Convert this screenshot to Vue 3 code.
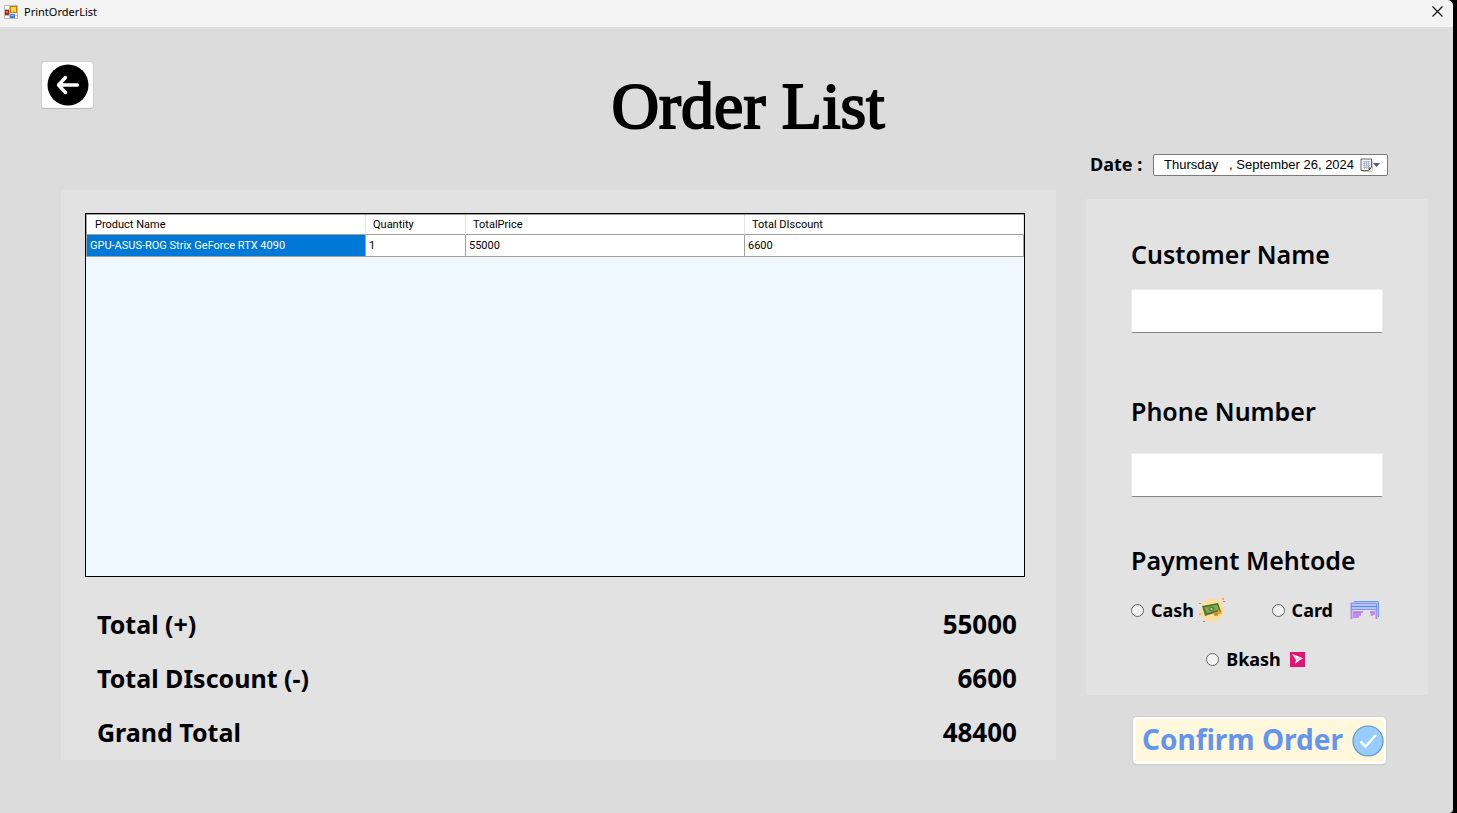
<script setup>
import { ref } from 'vue'

const columns = ['Product Name', 'Quantity', 'TotalPrice', 'Total DIscount']
const rows = [['GPU-ASUS-ROG Strix GeForce RTX 4090', '1', '55000', '6600']]
const totals = [
  { label: 'Total (+)', value: '55000' },
  { label: 'Total DIscount (-)', value: '6600' },
  { label: 'Grand Total', value: '48400' }
]
const date = ref('Thursday   , September 26, 2024')
const customer = ref('')
const phone = ref('')
const payment = ref('')
</script>

<template>
  <div class="window">
    <header class="titlebar">
      <svg class="app-icon" width="14" height="14" viewBox="0 0 14 14" aria-hidden="true">
        <rect x="0.5" y="0.5" width="13" height="13" fill="#fff" stroke="#bdbdbd" />
        <path d="M5.5 0v14M0 4.5h6M0 10.5h14" stroke="#bdbdbd" />
        <rect x="6.5" y="1.5" width="6" height="6" fill="#ffd24a" stroke="#b98500" />
        <rect x="1" y="5" width="4" height="5" fill="#b51f16" />
        <rect x="2" y="6" width="2" height="2" fill="#e56a5c" />
        <rect x="6" y="9" width="5" height="4" fill="#3f83e0" />
        <rect x="7" y="10" width="3" height="1" fill="#8fbcff" />
      </svg>
      <span class="caption">PrintOrderList</span>
      <button class="close" type="button" aria-label="Close">
        <svg width="11" height="11" viewBox="0 0 11 11"><path d="M0.5 0.5l10 10M10.5 0.5l-10 10" stroke="#111" stroke-width="1.2" /></svg>
      </button>
    </header>

    <div class="heading">
      <button class="back" type="button" aria-label="Back">
        <svg width="42" height="42" viewBox="0 0 42 42">
          <circle cx="21" cy="21" r="20.5" fill="#000" />
          <path d="M30.500 21H12M18.500 13.500L11.500 21l7 7.500" fill="none" stroke="#fff" stroke-width="3.400" stroke-linecap="round" stroke-linejoin="round" />
        </svg>
      </button>
      <h1>Order List</h1>
    </div>

    <main class="content">
      <section class="panel order">
        <div class="grid-box">
          <table>
            <colgroup>
              <col class="wide" /><col class="narrow" /><col class="wide" /><col class="wide" />
            </colgroup>
            <thead>
              <tr><th v-for="c in columns" :key="c" scope="col">{{ c }}</th></tr>
            </thead>
            <tbody>
              <tr v-for="(r, i) in rows" :key="i">
                <td v-for="(cell, j) in r" :key="j" :class="{ selected: i === 0 && j === 0 }">{{ cell }}</td>
              </tr>
            </tbody>
          </table>
        </div>
        <dl class="totals">
          <div v-for="t in totals" :key="t.label" class="total">
            <dt>{{ t.label }}</dt>
            <dd>{{ t.value }}</dd>
          </div>
        </dl>
      </section>

      <form class="side" @submit.prevent>
        <div class="date-row">
          <label for="date">Date :</label>
          <div class="picker">
            <input id="date" v-model="date" type="text" />
            <button type="button" aria-label="Open calendar">
              <svg width="21" height="14" viewBox="0 0 21 14">
                <path d="M2.500 13.500h9l1-1v-10" fill="none" stroke="#c9c5c0" />
                <path d="M1 1h10.500v8.500l-3 3H1z" fill="#f1f3f9" stroke="#6c6664" />
                <path d="M3 3.500h7M3 5.500h7M3 7.500h7M3 9.500h5M4.500 3v8M6.500 3v8M8.500 3v7" stroke="#a9b2c9" stroke-width=".8" />
                <path d="M8.500 12.500v-3h3z" fill="#5c5654" />
                <path d="M13 5h7l-3.500 4z" fill="#44598c" />
              </svg>
            </button>
          </div>
        </div>

        <div class="panel customer">
          <label class="field-label" for="customer">Customer Name</label>
          <input id="customer" v-model="customer" class="field" type="text" />
          <label class="field-label phone-label" for="phone">Phone Number</label>
          <input id="phone" v-model="phone" class="field phone" type="tel" />

          <fieldset>
            <legend>Payment Mehtode</legend>
            <div class="options">
              <label class="option">
                <input v-model="payment" type="radio" name="payment" value="cash" />
                <span>Cash</span>
                <svg width="26" height="24" viewBox="0 0 26 24" aria-hidden="true">
                  <circle cx="13" cy="12" r="11.500" fill="#fddf9b" />
                  <path d="M3 8l16-3 3 8-16 5z" fill="#527a34" />
                  <path d="M4.500 9l14-3 2 6-13 4z" fill="#7fa650" stroke="#3f652b" stroke-width=".8" />
                  <ellipse cx="12.500" cy="11" rx="3" ry="2.300" fill="#5b8639" />
                  <circle cx="12.500" cy="11" r="1.100" fill="#d9c877" />
                  <circle cx="17" cy="16" r="2.300" fill="#d4912d" /><circle cx="20.500" cy="14" r="2.200" fill="#dda02f" />
                  <path d="M16 16h2M20 13h2" stroke="#a36f24" />
                  <path d="M23 0h2v2h-2zM0 15h2v2H0z" fill="#f3b62e" />
                  <path d="M0 5h2v1H0zM24 3h2v1h-2zM4 23h2v1H4z" fill="#ed6a82" />
                </svg>
              </label>
              <label class="option card">
                <input v-model="payment" type="radio" name="payment" value="card" />
                <span>Card</span>
                <svg width="30" height="20" viewBox="0 0 30 20" aria-hidden="true">
                  <path d="M4 1.500h24.500V17" fill="none" stroke="#669df4" stroke-width="1" />
                  <path d="M1.500 19V3.500h25V19" fill="none" stroke="#b68af0" stroke-width="2" />
                  <path d="M1.500 3.500h25v6h-25z" fill="#b4c6ff" stroke="#7c99f3" />
                  <path d="M1 6.500h26" stroke="#5688f3" />
                  <path d="M3 11h10v2h-2v3H9v2H3zM20 11h5v4h-2v1h-2z" fill="#c58bf0" />
                  <path d="M4 12.500h8M20 12.500h4" stroke="#b07eea" />
                </svg>
              </label>
            </div>
            <div class="options second">
              <label class="option bkash">
                <input v-model="payment" type="radio" name="payment" value="bkash" />
                <span>Bkash</span>
                <svg width="15" height="15" viewBox="0 0 15 15" aria-hidden="true">
                  <rect width="15" height="15" fill="#e0156f" />
                  <path d="M2 2l7 2.500 4 2-3 1.500-5 4 1-4z" fill="#fff" />
                  <path d="M4 3l3 5 4-2M7 8l3-3" fill="none" stroke="#f29ac0" stroke-width=".6" />
                </svg>
              </label>
            </div>
          </fieldset>
        </div>

        <button class="confirm" type="submit">
          <span>Confirm Order</span>
          <svg width="32" height="32" viewBox="0 0 32 32" aria-hidden="true">
            <circle cx="16" cy="16" r="15" fill="#98ccfd" stroke="#5596c9" stroke-width="1.200" />
            <path d="M8.500 16.500l5 5L24 10" fill="none" stroke="#fff" stroke-width="2.500" />
          </svg>
        </button>
      </form>
    </main>
  </div>
</template>

<style>
body { margin: 0; background: #000; }
</style>

<style scoped>
* { box-sizing: border-box; }
.window {
  min-height: 100vh;
  margin-right: 4px;
  background: #dcdcdc;
  border-radius: 0 6px 4px 0;
  overflow: hidden;
  color: #000;
  font-family: "Noto Sans", "Open Sans", sans-serif;
}
button { font: inherit; cursor: pointer; }
svg { display: block; flex: none; }
.titlebar {
  display: flex;
  align-items: center;
  height: 27px;
  padding: 0 10px 4px 4px;
  background: #f3f3f3;
}
.caption { margin-left: 6px; font: 11px/16px "Noto Sans", sans-serif; }
.close { margin-left: auto; padding: 0; border: 0; background: none; }
.heading {
  display: flex;
  align-items: flex-start;
  padding: 34px 51px 0 41px;
  height: 126px;
}
.back {
  display: flex;
  align-items: center;
  justify-content: center;
  width: 53px;
  height: 48px;
  padding: 0;
  background: #fdfdfd;
  border: 1px solid #d0d0d0;
  border-bottom-color: #bbb;
  border-radius: 4px;
}
h1 {
  flex: 1;
  margin: 9px 0 0;
  text-align: center;
  font: 400 66px/72px "Liberation Serif", serif;
  -webkit-text-stroke: 2px #000;
}
.content {
  display: grid;
  grid-template-columns: minmax(0, 1fr) 342px;
  gap: 30px;
  align-items: start;
  padding: 0 25px 24px 61px;
}
.panel { background: #e2e2e2; }
.order { margin-top: 37px; padding: 23px 31px 11px 24px; }
.grid-box { height: 364px; background: #f0f8ff; border: 1px solid #000; }
table {
  width: 100%;
  table-layout: fixed;
  border-collapse: separate;
  border-spacing: 0;
  background: #fff;
  border-top: 1px solid #a0a0a0;
  border-left: 1px solid #a0a0a0;
  font: 11px/16px Roboto, sans-serif;
}
.wide { width: 30%; }
.narrow { width: 100px; }
th {
  height: 20px;
  padding: 0 7px;
  border-right: 1px solid #e5e5e5;
  border-bottom: 1px solid #a0a0a0;
  font-weight: 400;
  text-align: left;
}
th:first-child { padding-left: 8px; }
td {
  height: 22px;
  padding: 0 3px;
  border-right: 1px solid #a0a0a0;
  border-bottom: 1px solid #a0a0a0;
  white-space: nowrap;
}
.selected { color: #fff; background: #0078d7; }
.totals { display: grid; gap: 20px; margin: 30px 8px 0 12px; }
.total { display: flex; justify-content: space-between; font: 700 26px/34px "Noto Sans", sans-serif; }
dt { font-size: 25px; }
dd { margin: 0; }
.date-row { display: flex; align-items: center; justify-content: space-between; padding: 0 40px 0 4px; height: 24px; }
.date-row label { height: 26px; font: 700 18px/24px "Noto Sans", sans-serif; }
.picker {
  display: flex;
  align-items: center;
  width: 235px;
  height: 22px;
  padding: 0 6px 0 10px;
  background: #fff;
  border: 1px solid #7a7a7a;
  border-radius: 2px;
}
.picker input {
  flex: 1;
  min-width: 0;
  padding: 0;
  border: 0;
  background: none;
  font: 13px/18px "Liberation Sans", Arial, sans-serif;
}
.picker button { padding: 0; border: 0; background: none; }
.customer { margin-top: 22px; padding: 38px 45px 24px; }
.field-label, legend { display: block; padding: 0; font: 600 25px/34px "Noto Sans", sans-serif; white-space: nowrap; }
.field {
  display: block;
  width: 100%;
  height: 44px;
  margin-top: 18px;
  padding: 0 8px;
  border: 1px solid #ececec;
  border-bottom-color: #868686;
  border-radius: 2px;
  background: #fff;
  font-size: 20px;
}
.phone-label { margin-top: 61px; }
.phone { margin-top: 25px; }
fieldset { min-width: 0; margin: 46px 0 0; padding: 0; border: 0; }
.options { display: flex; justify-content: space-between; margin-top: 21px; padding-right: 3px; }
.second { justify-content: center; margin-top: 25px; }
.option { display: flex; align-items: center; height: 24px; font: 700 18px/24px "Noto Sans", sans-serif; }
.option input {
  appearance: none;
  width: 13px;
  height: 13px;
  margin: 0 7px 0 0;
  border: 1px solid #666;
  border-radius: 50%;
  background: #f3f3f3;
}
.option input:checked { border: 4px solid #0067c0; }
.option svg { margin-left: 5px; }
.card svg { margin-left: 17px; }
.bkash svg { margin-left: 9px; }
.confirm {
  display: flex;
  align-items: center;
  justify-content: space-between;
  width: 253px;
  height: 47px;
  margin: 22px 0 0 47px;
  padding: 0 0 0 7px;
  background: #fff8dc;
  border: 2px solid #fff;
  border-radius: 4px;
  box-shadow: 0 0 0 1px #cfcfcf, 0 1px 1px #aaa;
  color: #6495ed;
  font: 700 28px/40px "Noto Sans", sans-serif;
  white-space: nowrap;
}
.confirm span { padding-bottom: 4px; }
</style>
